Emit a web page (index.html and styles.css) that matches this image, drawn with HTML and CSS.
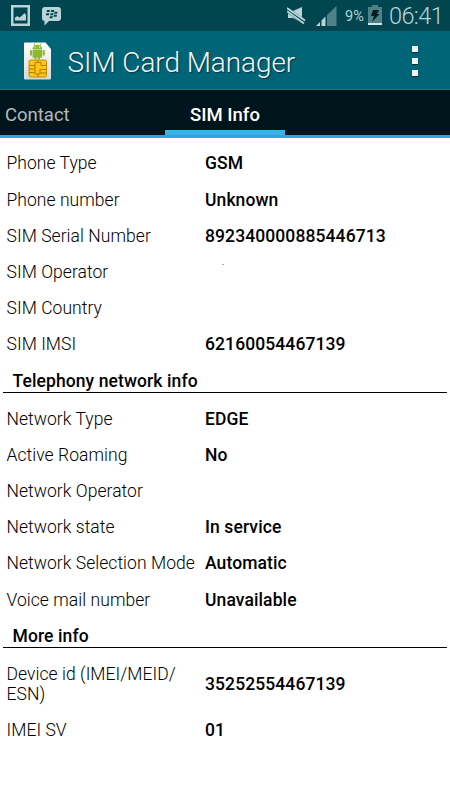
FILE: index.html
```html
<!DOCTYPE html>
<html lang="en">
<head>
    <meta charset="UTF-8">
    <meta name="viewport" content="width=device-width, initial-scale=1.0">
    <title>SIM Card Manager</title>
    <link rel="stylesheet" href="styles.css">
</head>
<body>

    <!-- Status bar -->
    <div class="status-bar">
        <svg class="icon-picture" width="19" height="21" viewBox="0 0 19 21">
            <path fill="#b9d3d7" fill-rule="evenodd" d="M0 0h19v21H0zM2.5 2.5v16h14v-16z"/>
            <path fill="#b9d3d7" d="M4 15.5v-3l2.500-1.500 1.500 1.500 2-1 3.500-3.500 1.500 2v5.500z"/>
        </svg>
        <svg class="icon-bbm" width="19" height="19" viewBox="0 0 19 19">
            <path fill="#b9d3d7" d="M3 0h13q3 0 3 3v8q0 3-3 3H7l-4.500 4.500V14Q0 14 0 11V3q0-3 3-3z"/>
            <path fill="#00454f" d="M5 3h3l-.5 2h-3zM9.300 3h3l-.5 2h-3zM4.300 6.200h3l-.5 2h-3zM8.600 6.200h3l-.5 2h-3zM12.500 4.700h3l-.5 2h-3zM12 7.700h3l-.5 2h-3zM7.900 9.300h3l-.5 2h-3z"/>
        </svg>
        <div class="status-right">
            <svg class="icon-mute" width="19" height="18" viewBox="0 0 19 18">
                <path fill="#b9d3d7" d="M1 4h5l9-4v15.500L6 11H1z"/>
                <path stroke="#00454f" stroke-width="5" d="M0 2.500l18 13"/>
                <path stroke="#b9d3d7" stroke-width="1.900" d="M0 1l18 12.500M0 4.200l17 12.300"/>
            </svg>
            <svg class="icon-signal" width="21" height="20" viewBox="0 0 21 20">
                <path fill="#4d828a" d="M11 20V9L20.500 0v20z"/>
                <path fill="#b9d3d7" d="M0 20l4-4v4zM5.500 20v-5.500l4-4V20z"/>
            </svg>
            <span class="percent">9%</span>
            <svg class="icon-battery" width="14" height="20" viewBox="0 0 14 20">
                <path fill="#4d828a" d="M0 2h4V0h6v2h4v16H0z"/>
                <path fill="#d5e6e8" d="M0 18h14v2H0z"/>
                <path fill="#001a20" d="M5 5h6L9 9h2.500L4 17l2-6H3z"/>
            </svg>
            <span class="clock">06:41</span>
        </div>
    </div>

    <!-- Action bar -->
    <header>
        <svg class="app-icon" width="28" height="38" viewBox="0 0 28 38">
            <defs>
                <linearGradient id="card" x1="0" y1="0" x2="0" y2="1">
                    <stop offset="0" stop-color="#fff"/>
                    <stop offset="1" stop-color="#d6d9dc"/>
                </linearGradient>
            </defs>
            <path fill="url(#card)" d="M1 .5h20.500L27 7v29.500q0 1-1 1H1q-1 0-1-1v-35q0-1 1-1z"/>
            <path fill="#8fb82e" d="M8.500 7q.5-4 4.800-4.200Q17.700 3 18.200 7zM8.500 7.500h9.700v7.300q0 1-1 1H16V17.500h-2v-1.700h-1.500V17.500h-2v-1.700H9.500q-1 0-1-1zM6 8.200h2V13.500H6zM18.800 8.200h2V13.500h-2z"/>
            <path stroke="#8fb82e" d="M10 1.500l1 2M17 1.500l-1 2"/>
            <path fill="#fff" d="M10.700 4.500h1v1h-1zM15 4.500h1v1h-1z"/>
            <rect x="5" y="18" width="17.500" height="17" rx="1.500" fill="#fbc616" stroke="#c48a00"/>
            <path fill="none" stroke="#b57f00" d="M5 23.500h6v-3h6v3h5.500M5 27h6M5 30.500h6V23.500M11 30.500v1.500h5v-4.500h6.500M16 31h6.500M14 18v2.500M14 32v3"/>
        </svg>
        <h1>SIM Card Manager</h1>
        <div class="overflow">
            <i></i><i></i><i></i>
        </div>
    </header>

    <!-- Tabs -->
    <nav>
        <div class="tab">Contact</div>
        <div class="tab active">SIM Info</div>
    </nav>

    <!-- SIM details -->
    <main>
        <dl>
            <dt>Phone Type</dt><dd>GSM</dd>
            <dt>Phone number</dt><dd>Unknown</dd>
            <dt>SIM Serial Number</dt><dd>892340000885446713</dd>
            <dt>SIM Operator</dt><dd class="blank"></dd>
            <dt>SIM Country</dt><dd></dd>
            <dt>SIM IMSI</dt><dd>62160054467139</dd>
        </dl>
        <h2>Telephony network info</h2>
        <dl>
            <dt>Network Type</dt><dd>EDGE</dd>
            <dt>Active Roaming</dt><dd>No</dd>
            <dt>Network Operator</dt><dd></dd>
            <dt>Network state</dt><dd>In service</dd>
            <dt>Network Selection Mode</dt><dd>Automatic</dd>
            <dt>Voice mail number</dt><dd>Unavailable</dd>
        </dl>
        <h2>More info</h2>
        <dl>
            <dt>Device id (IMEI/MEID/<br>ESN)</dt><dd>35252554467139</dd>
            <dt>IMEI SV</dt><dd>01</dd>
        </dl>
    </main>

</body>
</html>
```
FILE: styles.css
```css
* {
    box-sizing: border-box;
}

body {
    margin: 0;
    width: 450px;
    height: 800px;
    overflow: hidden;
    font-family: Roboto, sans-serif;
    background-color: white;
    color: black;
}

.status-bar {
    display: flex;
    height: 31px;
    padding-left: 11px;
    background-color: #00454f;
    color: #b9d3d7;
}

.icon-picture {
    margin-top: 5px;
}

.icon-bbm {
    margin: 7px 0 0 12px;
}

.status-right {
    display: flex;
    margin-left: auto;
    padding-right: 7px;
}

.icon-mute {
    margin: 7px 10px 0 0;
}

.icon-signal {
    margin: 6px 8px 0 0;
}

.percent {
    width: 23px;
    font-size: 14.5px;
    line-height: 33px;
}

.icon-battery {
    margin: 5px 7px 0 0;
}

.clock {
    width: 54px;
    font-size: 23.5px;
    font-weight: 300;
    line-height: 32px;
    letter-spacing: -0.6px;
    white-space: nowrap;
}

header {
    display: flex;
    align-items: center;
    height: 59px;
    padding: 2px 32px 0 24px;
    background-color: #006577;
    border-bottom: 1px solid #1c7280;
}

h1 {
    margin: 3px 0 0 15.5px;
    font-size: 28px;
    font-weight: 300;
    line-height: 40px;
    letter-spacing: -0.08px;
    color: #f3f3f3;
    text-shadow: 1px 1px 1px #003540;
}

.overflow {
    display: flex;
    flex-direction: column;
    gap: 6px;
    margin-left: auto;
}

.overflow i {
    width: 6px;
    height: 6px;
    background-color: #f3f3f3;
    box-shadow: 0 1px 1px #003540;
}

nav {
    display: flex;
    height: 48px;
    background-color: #00151b;
    border-bottom: 3px solid #1fabe1;
    font-size: 18.5px;
    line-height: 51px;
}

.tab {
    width: 165px;
    padding-left: 5px;
    color: #b6b9ba;
}

.active {
    width: 120px;
    height: 45px;
    padding: 0;
    border-bottom: 5px solid #33b5e5;
    font-weight: 500;
    text-align: center;
    color: white;
}

main {
    padding-top: 7.4px;
}

dl {
    display: grid;
    grid-template-columns: 198.5px 1fr;
    margin: 0;
    padding-left: 6.5px;
    font-size: 17.5px;
    line-height: 20.2px;
}

dt, dd {
    margin: 0;
    padding: 8px 0;
    min-height: 36.2px;
}

dt {
    font-weight: 300;
    letter-spacing: 0.05px;
    white-space: nowrap;
}

dd {
    align-self: center;
    font-weight: 500;
    letter-spacing: 0.1px;
}

.blank::before {
    content: "";
    display: block;
    width: 2px;
    height: 1px;
    margin: 2px 0 0 17px;
    background-color: #aaa;
}

h2 {
    height: 30.4px;
    margin: 0 3px 7.6px;
    padding-left: 9.5px;
    border-bottom: 1px solid black;
    font-size: 17.5px;
    font-weight: 500;
    line-height: 36.6px;
    letter-spacing: 0.1px;
}
```
